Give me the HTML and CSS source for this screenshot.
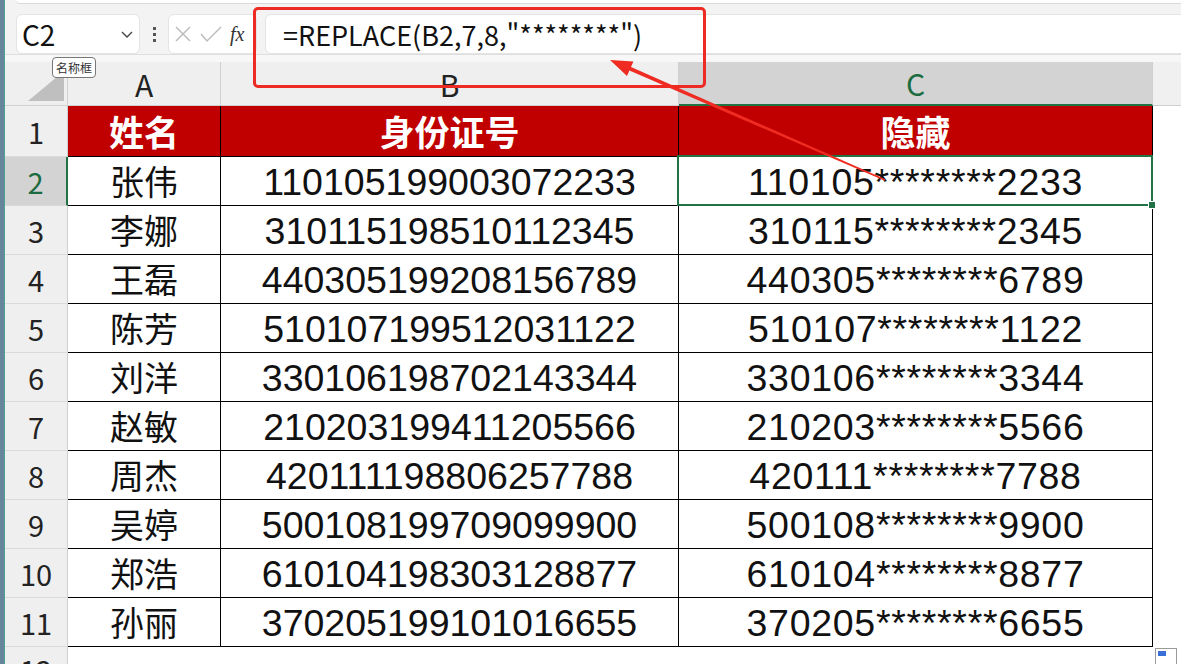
FILE: index.html
```html
<!DOCTYPE html>
<html lang="zh-CN">
<head>
  <meta charset="UTF-8">
  <title>REPLACE</title>
  <link rel="stylesheet" href="styles.css">
</head>
<body>
  <div class="app">
    <div class="edge"></div>
    <div class="main">
      <div class="ribbon-tail"></div>
      <div class="formula-bar">
        <div class="name-box">
          <span>C2</span>
          <svg width="12" height="7" viewBox="0 0 12 7"><polyline points="1,1 6,6 11,1" fill="none" stroke="#444" stroke-width="1.4"/></svg>
        </div>
        <div class="grip"><i></i><i></i><i></i></div>
        <div class="fx-group">
          <svg width="18" height="18" viewBox="0 0 18 18"><path d="M2 2 L16 16 M16 2 L2 16" stroke="#bdbdbd" stroke-width="1.5"/></svg>
          <svg width="22" height="18" viewBox="0 0 22 18"><polyline points="1,9 7,16 21,2" fill="none" stroke="#bdbdbd" stroke-width="1.5"/></svg>
          <span class="fx">fx</span>
        </div>
        <div class="formula-input">=REPLACE(B2,7,8,"********")</div>
      </div>
      <div class="gap"></div>

      <div class="sheet">
        <div class="corner"></div>
        <div class="col-head">A</div>
        <div class="col-head">B</div>
        <div class="col-head active">C</div>
        <div class="col-rest"></div>

        <div class="row-head">1</div>
        <div class="cell title">姓名</div>
        <div class="cell title">身份证号</div>
        <div class="cell title">隐藏</div>
        <div class="blank"></div>

        <div class="row-head active">2</div>
        <div class="cell name">张伟</div>
        <div class="cell">110105199003072233</div>
        <div class="cell masked selected">110105********2233</div>
        <div class="blank"></div>

        <div class="row-head">3</div>
        <div class="cell name">李娜</div>
        <div class="cell">310115198510112345</div>
        <div class="cell masked">310115********2345</div>
        <div class="blank"></div>

        <div class="row-head">4</div>
        <div class="cell name">王磊</div>
        <div class="cell">440305199208156789</div>
        <div class="cell masked">440305********6789</div>
        <div class="blank"></div>

        <div class="row-head">5</div>
        <div class="cell name">陈芳</div>
        <div class="cell">510107199512031122</div>
        <div class="cell masked">510107********1122</div>
        <div class="blank"></div>

        <div class="row-head">6</div>
        <div class="cell name">刘洋</div>
        <div class="cell">330106198702143344</div>
        <div class="cell masked">330106********3344</div>
        <div class="blank"></div>

        <div class="row-head">7</div>
        <div class="cell name">赵敏</div>
        <div class="cell">210203199411205566</div>
        <div class="cell masked">210203********5566</div>
        <div class="blank"></div>

        <div class="row-head">8</div>
        <div class="cell name">周杰</div>
        <div class="cell">420111198806257788</div>
        <div class="cell masked">420111********7788</div>
        <div class="blank"></div>

        <div class="row-head">9</div>
        <div class="cell name">吴婷</div>
        <div class="cell">500108199709099900</div>
        <div class="cell masked">500108********9900</div>
        <div class="blank"></div>

        <div class="row-head">10</div>
        <div class="cell name">郑浩</div>
        <div class="cell">610104198303128877</div>
        <div class="cell masked">610104********8877</div>
        <div class="blank"></div>

        <div class="row-head">11</div>
        <div class="cell name">孙丽</div>
        <div class="cell">370205199101016655</div>
        <div class="cell masked">370205********6655</div>
        <div class="blank"></div>

        <div class="row-head last">12</div>
        <div class="blank wide"></div>
      </div>
    </div>

    <!-- things drawn over the sheet -->
    <div class="tooltip">名称框</div>
    <div class="mark-box"></div>
    <svg class="arrow" width="1181" height="664" viewBox="0 0 1181 664">
      <polygon points="610,60 633.4,61.5 631,67 885.3,179.3 884.7,180.7 629.4,70.6 627,76.1" fill="#ef2b22"/>
    </svg>
    <div class="quick-icon"><span></span></div>
  </div>
</body>
</html>
```

FILE: styles.css
```css
html, body {
  margin: 0;
  height: 100%;
  overflow: hidden;
}
body {
  font-family: "Noto Sans CJK SC", "Noto Sans", sans-serif;
  background: #f3f3f3;
  color: #111;
}
.app {
  position: relative;
  display: flex;
  width: 1181px;
  height: 664px;
}
.edge {
  width: 4px;
  background: #67869a;
  border-right: 1px solid #4fa394;
}
.main {
  flex: 1;
  display: flex;
  flex-direction: column;
  min-width: 0;
}
.main > * {
  flex-shrink: 0;
}
.ribbon-tail {
  height: 3px;
  margin-left: 11px;
  background: #fff;
  border-bottom: 1px solid #d9d9d9;
  border-radius: 0 0 0 6px;
}
.formula-bar {
  display: flex;
  align-items: center;
  height: 40px;
  padding: 10px 0 0 11px;
  background: #f3f3f3;
  border-bottom: 1px solid #dedede;
}
.name-box {
  width: 124px;
  height: 40px;
  box-sizing: border-box;
  display: flex;
  align-items: center;
  justify-content: space-between;
  padding: 0 6px 0 5px;
  background: #fff;
  border: 1px solid #e4e4e4;
  border-radius: 6px;
  font-size: 28px;
}
.grip {
  width: 28px;
  display: flex;
  flex-direction: column;
  align-items: center;
  gap: 3px;
}
.grip i {
  width: 3px;
  height: 3px;
  background: #555;
}
.fx-group {
  width: 89px;
  height: 40px;
  box-sizing: border-box;
  display: flex;
  align-items: center;
  gap: 8px;
  padding-left: 5px;
  background: #fff;
  border: 1px solid #e4e4e4;
  border-radius: 6px;
}
.fx {
  font-family: "Liberation Serif", serif;
  font-style: italic;
  font-size: 20px;
  color: #333;
}
.formula-input {
  flex: 1;
  height: 40px;
  box-sizing: border-box;
  margin: 0 -10px 0 8px;
  padding-left: 17px;
  display: flex;
  align-items: center;
  background: #fff;
  border: 1px solid #e4e4e4;
  border-radius: 6px;
  font-size: 27px;
  color: #111;
}
.gap {
  height: 7px;
  background: #f7f7f7;
}

.sheet {
  display: grid;
  grid-template-columns: 63px 153px 458px 474px 1fr;
  grid-template-rows: 44px 51px repeat(11, 49px);
  background: #fff;
}
.corner {
  position: relative;
  background: #efefef;
  border-right: 1px solid #d2d2d2;
  border-bottom: 1px solid #d2d2d2;
}
.corner::after {
  content: "";
  position: absolute;
  right: 3px;
  bottom: 4px;
  width: 36px;
  height: 30px;
  background: #bfbfbf;
  clip-path: polygon(100% 0, 100% 100%, 0 100%);
}
.col-head {
  display: flex;
  align-items: center;
  justify-content: center;
  background: #efefef;
  border-right: 1px solid #cfcfcf;
  border-bottom: 1px solid #cfcfcf;
  font-size: 30px;
  line-height: 1.2;
  color: #222;
}
.col-head.active {
  background: #d3d3d3;
  color: #1d6b40;
  border-bottom: 2px solid #217346;
}
.col-rest {
  background: #f0f0f0;
  border-bottom: 1px solid #cfcfcf;
}
.row-head {
  display: flex;
  align-items: center;
  justify-content: center;
  background: #efefef;
  border-right: 1px solid #cfcfcf;
  border-bottom: 1px solid #dadada;
  font-size: 29px;
  line-height: 1.2;
  color: #222;
}
.row-head.active {
  background: #d3d3d3;
  color: #1d6b40;
  border-right: 2px solid #217346;
}
.row-head.last {
  align-items: flex-start;
  line-height: 1;
  padding-top: 8px;
}
.cell {
  display: flex;
  align-items: center;
  justify-content: center;
  padding-top: 4px;
  border-right: 1px solid #000;
  border-bottom: 1px solid #000;
  font-family: "Liberation Sans", "Noto Sans CJK SC", sans-serif;
  font-size: 37.5px;
  line-height: 1.1;
  color: #111;
  white-space: nowrap;
}
.cell.masked {
  letter-spacing: 0.7px;
}
.cell.name,
.cell.title {
  padding-top: 0;
  font-family: "Noto Sans CJK SC", sans-serif;
  font-size: 34px;
}
.cell.title {
  background: #c00000;
  color: #fff;
  font-size: 35px;
  font-weight: bold;
}
.cell.selected {
  position: relative;
}
.cell.selected::after {
  content: "";
  position: absolute;
  left: -2px;
  top: -2px;
  right: -1px;
  bottom: -1px;
  border: 2px solid #217346;
}
.cell.selected::before {
  content: "";
  position: absolute;
  right: -4px;
  bottom: -4px;
  width: 6px;
  height: 6px;
  background: #217346;
  border: 1px solid #fff;
  z-index: 1;
}
.blank {
  background: #fff;
}
.blank.wide {
  grid-column: 2 / 6;
}

.tooltip {
  position: absolute;
  left: 52px;
  top: 57px;
  padding: 1px 3px;
  background: #fff;
  border: 1px solid #777;
  border-radius: 4px;
  font-size: 12px;
  color: #333;
}
.mark-box {
  position: absolute;
  left: 253px;
  top: 7px;
  width: 453px;
  height: 81px;
  box-sizing: border-box;
  border: 3px solid #ee2a24;
  border-radius: 5px;
}
.arrow {
  position: absolute;
  left: 0;
  top: 0;
  pointer-events: none;
}
.quick-icon {
  position: absolute;
  left: 1155px;
  top: 648px;
  width: 22px;
  height: 18px;
  box-sizing: border-box;
  background: #fff;
  border: 1px solid #9a9a9a;
}
.quick-icon span {
  display: block;
  margin: 2px;
  width: 8px;
  height: 5px;
  background: #3b6fd8;
}
```
